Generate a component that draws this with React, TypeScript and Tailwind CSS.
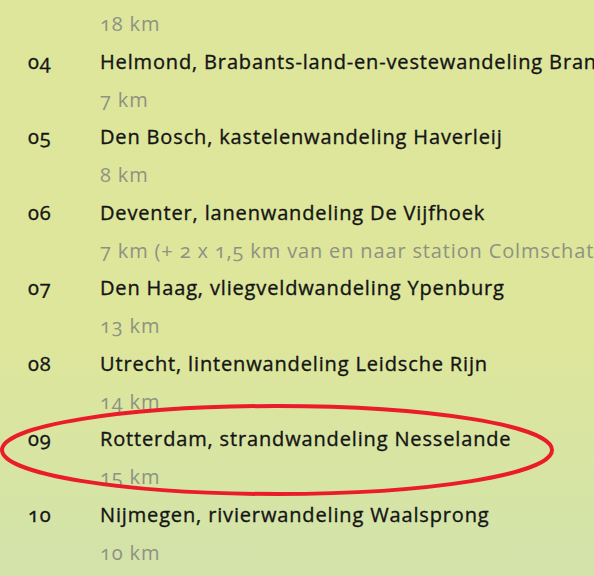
const walks = [
  { nr: "04", title: "Helmond, Brabants-land-en-vestewandeling Brandevoort", km: "7 km" },
  { nr: "05", title: "Den Bosch, kastelenwandeling Haverleij", km: "8 km" },
  { nr: "06", title: "Deventer, lanenwandeling De Vijfhoek", km: "7 km (+ 2 x 1,5 km van en naar station Colmschate)" },
  { nr: "07", title: "Den Haag, vliegveldwandeling Ypenburg", km: "13 km" },
  { nr: "08", title: "Utrecht, lintenwandeling Leidsche Rijn", km: "14 km" },
  { nr: "09", title: "Rotterdam, strandwandeling Nesselande", km: "15 km" },
  { nr: "10", title: "Nijmegen, rivierwandeling Waalsprong", km: "10 km" },
]

const App = () => {
  return (
    <div className="relative h-[576px] w-[594px] overflow-hidden bg-gradient-to-b from-[#dde69b] from-60% to-[#d2e3aa] font-['Open_Sans',sans-serif] text-[20px] leading-[37.75px] tracking-[0.85px] oldstyle-nums">
      <div className="pt-[5px] pl-[100px] text-[#8f9282] whitespace-nowrap">18 km</div>
      {walks.map((w) => (
        <div key={w.nr} className="flex whitespace-nowrap">
          <div className="w-[100px] shrink-0 pl-[28px] text-[#141414] [-webkit-text-stroke:0.35px_#141414]">{w.nr}</div>
          <div>
            <div className="text-[#141414] [-webkit-text-stroke:0.35px_#141414]">{w.title}</div>
            <div className="text-[#8f9282]">{w.km}</div>
          </div>
        </div>
      ))}

      {/* red marker circle around 09 */}
      <svg className="absolute left-0 top-0" width="594" height="576">
        <ellipse cx="277" cy="450" rx="275" ry="44" fill="none" stroke="#ea1c2a" strokeWidth="4" />
      </svg>
    </div>
  )
}

export default App
